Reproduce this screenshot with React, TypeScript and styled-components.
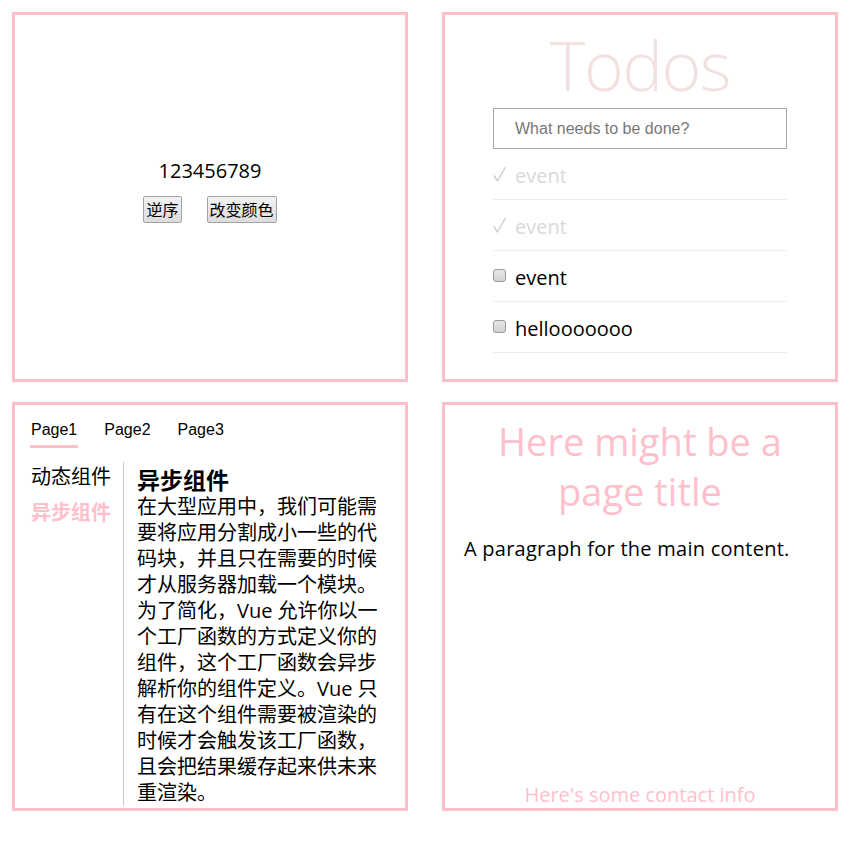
import React from "react";
import styled, { createGlobalStyle } from "styled-components";

const pink = "#ffc0cb";

const GlobalStyle = createGlobalStyle`
  html, body {
    margin: 0;
    padding: 0;
    background: #fff;
  }
  body {
    font-family: "Open Sans", "Noto Sans CJK SC", sans-serif;
    font-size: 20px;
    color: #000;
  }
  * {
    box-sizing: border-box;
  }
`;

const Board = styled.div`
  display: grid;
  grid-template-columns: 396px 396px;
  grid-template-rows: 370px 409px;
  column-gap: 34px;
  row-gap: 20px;
  padding: 12px 0 0 12px;
`;

const Panel = styled.section`
  border: 3px solid ${pink};
  overflow: hidden;
`;

/* ---------- panel 1: reverse / colour ---------- */

const CounterPanel = styled(Panel)`
  display: flex;
  flex-direction: column;
  align-items: center;
  padding-top: 142px;
`;

const Digits = styled.div<{ $color?: string }>`
  font-size: 20px;
  line-height: 27px;
  color: ${(p) => p.$color ?? "#000"};
`;

const ButtonRow = styled.div`
  display: flex;
  gap: 25px;
  margin-top: 12px;
`;

const OldButton = styled.button`
  font-family: "Noto Sans CJK SC", sans-serif;
  font-size: 16px;
  line-height: 21px;
  padding: 2px 2px;
  color: #000;
  border: 1px solid #a3a3a3;
  border-radius: 2px;
  background: linear-gradient(#f2f2f2, #dcdcdc);
`;

/* ---------- panel 2: todos ---------- */

const TodoPanel = styled(Panel)`
  display: flex;
  flex-direction: column;
  align-items: center;
  padding-top: 15px;
`;

const TodoTitle = styled.h1`
  margin: 0;
  font-size: 68px;
  font-weight: 300;
  line-height: 70px;
  letter-spacing: -1.5px;
  color: rgba(175, 47, 47, 0.15);
`;

const TodoBox = styled.div`
  width: 294px;
  margin-top: 8px;
`;

const NewTodo = styled.input`
  display: block;
  width: 100%;
  height: 41px;
  padding: 0 0 0 21px;
  border: 1px solid #a6a6a6;
  font-family: "Liberation Sans", Arial, sans-serif;
  font-size: 16px;
  outline: none;

  &::placeholder {
    color: #777;
  }
`;

const TodoList = styled.ul`
  list-style: none;
  margin: 0;
  padding: 0;
`;

const TodoItem = styled.li<{ $done?: boolean }>`
  display: flex;
  align-items: center;
  height: 51px;
  padding-top: 2px;
  border-bottom: 1px solid #ededed;
  font-size: 20px;
  color: ${(p) => (p.$done ? "#d9d9d9" : "#000")};
`;

const Tick = styled.svg`
  flex: none;
  width: 14px;
  height: 16px;
  margin: 0 8px 2px 0;
`;

const Check = styled.input`
  appearance: none;
  width: 13px;
  height: 13px;
  margin: 0 9px 4px 0;
  border: 1px solid #9a9a9a;
  border-radius: 3px;
  background: linear-gradient(#e6e6e6, #d2d2d2);
`;

const TickIcon = () => (
  <Tick viewBox="0 0 14 16">
    <polyline
      points="1,9.5 4.5,15 12.5,1"
      fill="none"
      stroke="#cdcdcd"
      strokeWidth="1.4"
      strokeLinejoin="round"
    />
  </Tick>
);

/* ---------- panel 3: tabs ---------- */

const TabsPanel = styled(Panel)`
  padding: 15px 0 3px 16px;
  display: flex;
  flex-direction: column;
`;

const TabBar = styled.nav`
  display: flex;
  gap: 25px;
  margin-left: -1px;
`;

const Tab = styled.span<{ $active?: boolean }>`
  padding: 1px 1px 6px;
  font-family: "Liberation Sans", Arial, sans-serif;
  font-size: 16px;
  line-height: 18px;
  border-bottom: 3px solid ${(p) => (p.$active ? pink : "transparent")};
`;

const TabBody = styled.div`
  display: flex;
  flex: 1;
  margin-top: 14px;
`;

const SideNav = styled.ul`
  list-style: none;
  margin: 0;
  padding: 1px 0 0;
  width: 93px;
  border-right: 1px solid #ccc;
`;

const SideItem = styled.li<{ $active?: boolean }>`
  font-family: "Noto Sans CJK SC", sans-serif;
  font-size: 20px;
  line-height: 26px;
  margin-bottom: 10px;
  color: ${(p) => (p.$active ? pink : "#000")};
  font-weight: ${(p) => (p.$active ? 700 : 400)};
`;

const Article = styled.article`
  width: 259px;
  padding: 3px 0 0 13px;
`;

const ArticleTitle = styled.h3`
  margin: 0;
  font-family: "Noto Sans CJK SC", sans-serif;
  font-size: 23px;
  line-height: 29px;
  font-weight: 700;
`;

const ArticleText = styled.p`
  margin: 0;
  font-size: 20px;
  line-height: 26px;
`;

/* ---------- panel 4: layout ---------- */

const LayoutPanel = styled(Panel)`
  display: flex;
  flex-direction: column;
  padding: 11px 19px 0;
`;

const PageTitle = styled.h1`
  margin: 0;
  text-align: center;
  font-size: 38px;
  font-weight: 400;
  line-height: 50px;
  color: ${pink};
`;

const MainText = styled.p`
  margin: 20px 0 0;
  font-size: 20px;
  line-height: 26px;
  letter-spacing: 0.25px;
`;

const Footer = styled.footer`
  margin-top: auto;
  text-align: center;
  font-size: 20px;
  line-height: 26px;
  color: ${pink};
`;

const todos = [
  { text: "event", done: true },
  { text: "event", done: true },
  { text: "event", done: false },
  { text: "hellooooooo", done: false },
];

export default function App() {
  return (
    <>
      <GlobalStyle />
      <Board>
        <CounterPanel>
          <Digits>123456789</Digits>
          <ButtonRow>
            <OldButton>逆序</OldButton>
            <OldButton>改变颜色</OldButton>
          </ButtonRow>
        </CounterPanel>

        <TodoPanel>
          <TodoTitle>Todos</TodoTitle>
          <TodoBox>
            <NewTodo placeholder="What needs to be done?" />
            <TodoList>
              {todos.map((t, i) => (
                <TodoItem key={i} $done={t.done}>
                  {t.done ? <TickIcon /> : <Check type="checkbox" />}
                  {t.text}
                </TodoItem>
              ))}
            </TodoList>
          </TodoBox>
        </TodoPanel>

        <TabsPanel>
          <TabBar>
            <Tab $active>Page1</Tab>
            <Tab>Page2</Tab>
            <Tab>Page3</Tab>
          </TabBar>
          <TabBody>
            <SideNav>
              <SideItem>动态组件</SideItem>
              <SideItem $active>异步组件</SideItem>
            </SideNav>
            <Article>
              <ArticleTitle>异步组件</ArticleTitle>
              <ArticleText>
                在大型应用中，我们可能需要将应用分割成小一些的代码块，并且只在需要的时候才从服务器加载一个模块。为了简化，Vue
                允许你以一个工厂函数的方式定义你的组件，这个工厂函数会异步解析你的组件定义。Vue
                只有在这个组件需要被渲染的时候才会触发该工厂函数，且会把结果缓存起来供未来重渲染。
              </ArticleText>
            </Article>
          </TabBody>
        </TabsPanel>

        <LayoutPanel>
          <PageTitle>Here might be a page title</PageTitle>
          <MainText>A paragraph for the main content.</MainText>
          <Footer>Here's some contact info</Footer>
        </LayoutPanel>
      </Board>
    </>
  );
}
